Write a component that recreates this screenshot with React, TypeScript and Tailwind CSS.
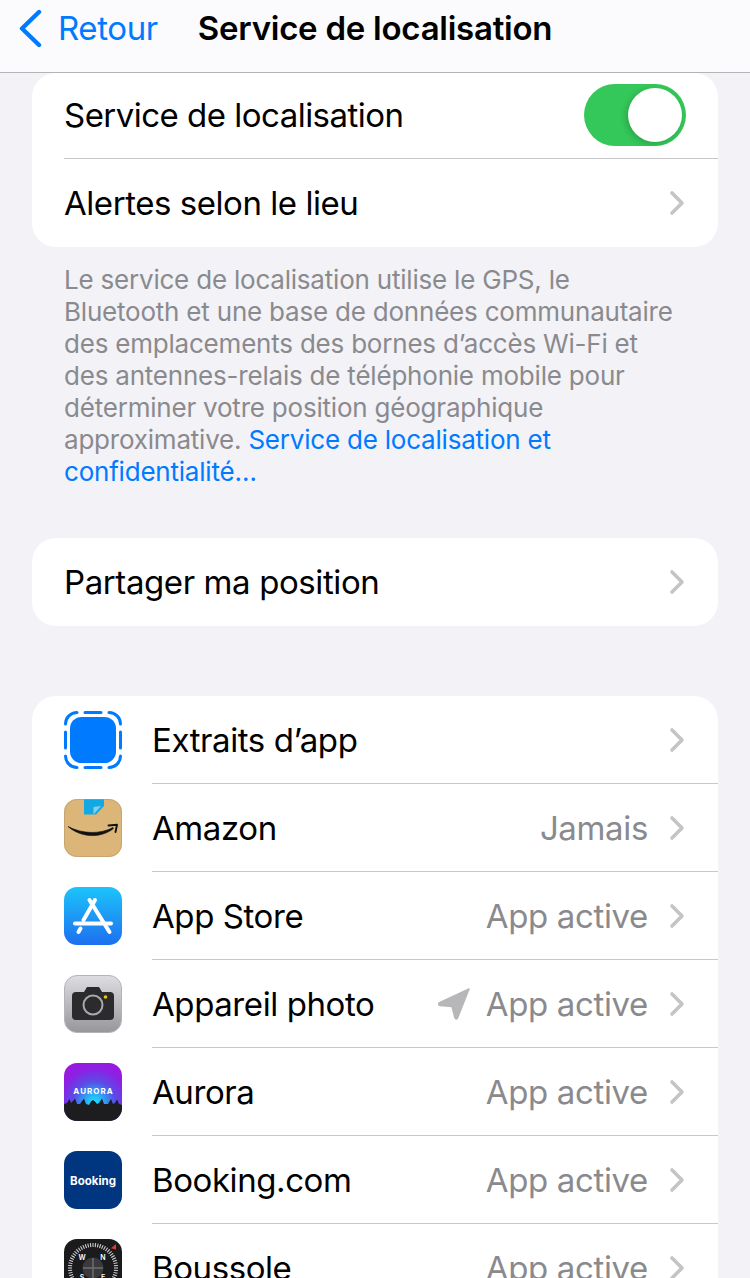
import React from "react";

const F = '[font-family:Inter,"Noto_Sans",sans-serif]';

function Chevron() {
  return (
    <svg width="16" height="26" viewBox="0 0 16 26" className="shrink-0">
      <path d="M3 3 L13 13 L3 23" fill="none" stroke="#c4c4c7" strokeWidth="3.6" strokeLinecap="round" strokeLinejoin="round" />
    </svg>
  );
}

function Clips() {
  return (
    <svg width="58" height="58" viewBox="0 0 58 58">
      <rect x="6" y="6" width="46" height="46" rx="11.5" fill="#007aff" />
      <path
        d="M1.500 13 A11.500 11.500 0 0 1 13 1.500 M45 1.500 A11.500 11.500 0 0 1 56.500 13 M56.500 45 A11.500 11.500 0 0 1 45 56.500 M13 56.500 A11.500 11.500 0 0 1 1.500 45 M21 1.500 H37 M21 56.500 H37 M1.500 21 V37 M56.500 21 V37"
        fill="none"
        stroke="#007aff"
        strokeWidth="3"
        strokeLinecap="round"
      />
    </svg>
  );
}

function Amazon() {
  return (
    <svg width="58" height="58" viewBox="0 0 58 58">
      <defs>
        <clipPath id="am"><rect width="58" height="58" rx="13" /></clipPath>
      </defs>
      <g clipPath="url(#am)">
        <rect width="58" height="58" fill="#dcb678" />
        <path d="M20 0 H40 V7 L32 15.500 H20 Z" fill="#12a9e3" />
        <path d="M29.500 8 L37 7 L29.500 15.500 Z" fill="#7fd0ee" />
        <path d="M4 27.500 C18 35 36 35.500 49 28.500 L49.500 29.500 C37 39.500 17 39 4 27.500 Z" fill="#111" stroke="#111" strokeWidth=".6" strokeLinejoin="round" />
        <path d="M44.500 26.500 L53 25.800 L51.500 33" fill="none" stroke="#111" strokeWidth="1.900" strokeLinecap="round" strokeLinejoin="round" />
      </g>
      <rect x=".5" y=".5" width="57" height="57" rx="12.5" fill="none" stroke="#b89a6a" strokeOpacity=".6" />
    </svg>
  );
}

function AppStore() {
  return (
    <svg width="58" height="58" viewBox="0 0 58 58">
      <defs>
        <linearGradient id="as" x1="0" y1="0" x2="0" y2="1">
          <stop offset="0" stopColor="#1cc4fb" />
          <stop offset="1" stopColor="#1e6ff0" />
        </linearGradient>
      </defs>
      <rect width="58" height="58" rx="13" fill="url(#as)" />
      <g stroke="#fff" strokeLinecap="round" fill="none" strokeWidth="4">
        <path d="M31 13 L19.500 33" />
        <path d="M25.500 13 L45.500 45" />
        <path d="M11 36.500 H47" />
        <path d="M16.500 41.500 L14.500 45" />
      </g>
    </svg>
  );
}

function Camera() {
  return (
    <svg width="58" height="58" viewBox="0 0 58 58">
      <defs>
        <linearGradient id="cm" x1="0" y1="0" x2="0" y2="1">
          <stop offset="0" stopColor="#dedee2" />
          <stop offset="1" stopColor="#96969b" />
        </linearGradient>
      </defs>
      <rect x=".5" y=".5" width="57" height="57" rx="12.5" fill="url(#cm)" stroke="#b5b5b9" />
      <path d="M12 17 H20 L23 12 H35 L38 17 H46 Q50 17 50 21 V41 Q50 45 46 45 H12 Q8 45 8 41 V21 Q8 17 12 17 Z" fill="#2b2b2d" />
      <circle cx="29" cy="30" r="9.5" fill="none" stroke="#a9a9ad" strokeWidth="2" />
      <circle cx="41.500" cy="22" r="1.800" fill="#f5c400" />
    </svg>
  );
}

function Aurora() {
  return (
    <svg width="58" height="58" viewBox="0 0 58 58">
      <defs>
        <clipPath id="au"><rect width="58" height="58" rx="13" /></clipPath>
        <radialGradient id="ag" cx=".52" cy=".68" r=".72">
          <stop offset="0" stopColor="#1fe6ff" />
          <stop offset=".22" stopColor="#2aa8f5" />
          <stop offset=".5" stopColor="#5a4ce6" />
          <stop offset=".8" stopColor="#8a22e4" />
          <stop offset="1" stopColor="#9a18e0" />
        </radialGradient>
      </defs>
      <g clipPath="url(#au)">
        <rect width="58" height="58" fill="url(#ag)" />
        <path d="M0 41 L3 40 L5.500 36 L7 40 L9 38 L11 35.500 L13 41 L16 41 L18 38 L20 35.500 L22 41 L25 42 L27 38.500 L29 37 L31 38.500 L33 41 L35 40 L38 35.500 L40 41 L44 41 L47 36 L49 41 L51 40 L53 36.500 L55 41 L58 42 V58 H0 Z" fill="#1d1d1f" />
      </g>
      <text x="29.500" y="31.200" textAnchor="middle" fill="#fff" fontFamily="Inter, sans-serif" fontSize="8" fontWeight="700" letterSpacing="1">AURORA</text>
    </svg>
  );
}

function Booking() {
  return (
    <svg width="58" height="58" viewBox="0 0 58 58">
      <rect width="58" height="58" rx="13" fill="#003580" />
      <text x="29" y="33.500" textAnchor="middle" fill="#fff" fontFamily="Inter, sans-serif" fontSize="11.500" fontWeight="700">Booking</text>
    </svg>
  );
}

function Compass() {
  const ticks = Array.from({ length: 60 }, (_, i) => i * 6);
  return (
    <svg width="58" height="58" viewBox="0 0 58 58">
      <rect width="58" height="58" rx="13" fill="#1b1b1d" />
      {ticks.map((a) => (
        <line key={a} x1="29" y1="4" x2="29" y2="8" stroke="#d8d8d8" strokeWidth="1" transform={`rotate(${a} 29 29)`} />
      ))}
      <path d="M47 9.300 L52 5 L52 10.500 Z" fill="#f0352b" />
      <text x="18" y="21" textAnchor="middle" fill="#fff" fontFamily="Inter, sans-serif" fontSize="7" fontWeight="600">W</text>
      <text x="39" y="21" textAnchor="middle" fill="#fff" fontFamily="Inter, sans-serif" fontSize="7" fontWeight="600">N</text>
      <text x="18" y="41" textAnchor="middle" fill="#fff" fontFamily="Inter, sans-serif" fontSize="7" fontWeight="600">S</text>
      <text x="39" y="41" textAnchor="middle" fill="#fff" fontFamily="Inter, sans-serif" fontSize="7" fontWeight="600">E</text>
      <circle cx="29" cy="29" r="10.500" fill="#3a3a3c" />
      <path d="M29 19 V39 M19 29 H39" stroke="#6e6e70" strokeWidth="1.500" />
    </svg>
  );
}

function Arrow() {
  return (
    <svg width="34" height="34" viewBox="0 0 34 34" className="shrink-0 mr-[15px]">
      <path d="M32 2 L2 16 Q1 18 3 18.500 L15 19.500 L18 31 Q19 33 20.500 31 Z" fill="#b7b7ba" stroke="#b7b7ba" strokeWidth="1.500" strokeLinejoin="round" />
    </svg>
  );
}

function AppRow({ icon, name, value, arrow, last }: { icon: React.ReactNode; name: string; value?: string; arrow?: boolean; last?: boolean }) {
  return (
    <div className="flex h-[88px] items-center pl-[32px]">
      <div className="w-[58px] h-[58px] shrink-0 mr-[30px]">{icon}</div>
      <div className={`flex-1 h-full flex items-center pr-[33px] ${last ? "" : "border-b border-[#c8c8cb]"}`}>
        <span className="text-[33px] tracking-[-0.42px] text-black flex-1 pt-[2px]">{name}</span>
        {arrow && <Arrow />}
        {value && <span className="text-[33px] tracking-[-0.35px] text-[#8a8a8e] mr-[21px] pt-[2px]">{value}</span>}
        <Chevron />
      </div>
    </div>
  );
}

export default function App() {
  return (
    <div className={`h-[1278px] w-[750px] overflow-hidden bg-[#f2f2f7] flex flex-col ${F}`}>
      <header className="h-[73px] shrink-0 bg-[#fbfbfd] border-b border-[#b4b4b6] flex items-start pt-[8px]">
        <svg width="24" height="40" viewBox="0 0 24 40" className="ml-[18px] mt-[1px]">
          <path d="M21 3 L4 19.500 L21 36" fill="none" stroke="#007aff" strokeWidth="4.400" strokeLinecap="round" strokeLinejoin="round" />
        </svg>
        <span className="ml-[16px] text-[33px] leading-[40px] tracking-[-0.4px] text-[#007aff]">Retour</span>
        <span className="ml-[40px] text-[33px] leading-[40px] tracking-[-0.25px] font-semibold text-black">Service de localisation</span>
      </header>

      <main className="px-[32px] flex flex-col">
        <section className="bg-white rounded-[24px] h-[174px]">
          <div className="h-[86px] ml-[32px] pr-[32px] flex items-center border-b border-[#c8c8cb]">
            <span className="flex-1 text-[33px] tracking-[-0.52px] text-black">Service de localisation</span>
            <div className="w-[102px] h-[62px] mb-[2px] rounded-full bg-[#34c759] flex items-center justify-end pr-[4px]">
              <div className="w-[54px] h-[54px] rounded-full bg-white shadow-[-2px_2px_6px_rgba(0,0,0,0.18)]" />
            </div>
          </div>
          <div className="h-[88px] ml-[32px] pr-[33px] flex items-center justify-between">
            <span className="text-[33px] tracking-[-0.45px] text-black pt-[2px]">Alertes selon le lieu</span>
            <Chevron />
          </div>
        </section>

        <p className="mt-[17px] px-[32px] text-[26px] leading-[32px] tracking-[-0.21px] text-[#8a8a8e]">
          Le service de localisation utilise le GPS, le Bluetooth et une base de données communautaire des emplacements des bornes d’accès Wi-Fi et des antennes-relais de téléphonie mobile pour déterminer votre position géographique approximative. <span className="text-[#007aff]">Service de localisation et confidentialité…</span>
        </p>

        <section className="mt-[50px] bg-white rounded-[24px] h-[88px] pl-[32px] pr-[33px] flex items-center justify-between shrink-0">
          <span className="text-[33px] tracking-[-0.4px] text-black pt-[2px]">Partager ma position</span>
          <Chevron />
        </section>

        <section className="mt-[70px] bg-white rounded-[24px] shrink-0 pb-[40px]">
          <AppRow icon={<Clips />} name="Extraits d’app" />
          <AppRow icon={<Amazon />} name="Amazon" value="Jamais" />
          <AppRow icon={<AppStore />} name="App Store" value="App active" />
          <AppRow icon={<Camera />} name="Appareil photo" value="App active" arrow />
          <AppRow icon={<Aurora />} name="Aurora" value="App active" />
          <AppRow icon={<Booking />} name="Booking.com" value="App active" />
          <AppRow icon={<Compass />} name="Boussole" value="App active" last />
        </section>
      </main>
    </div>
  );
}
